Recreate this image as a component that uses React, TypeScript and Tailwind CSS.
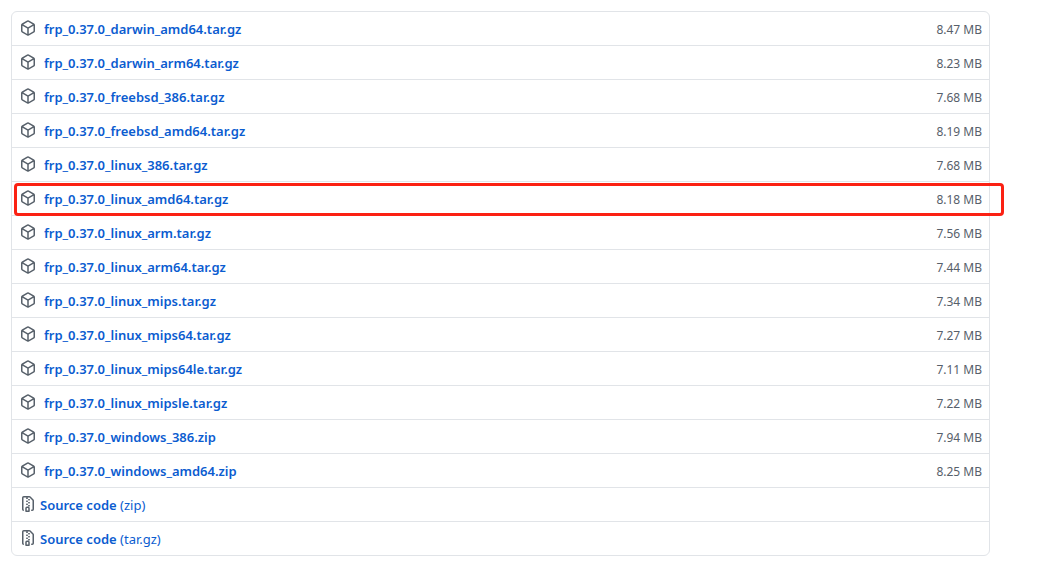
const assets = [
  { name: "frp_0.37.0_darwin_amd64.tar.gz", size: "8.47 MB" },
  { name: "frp_0.37.0_darwin_arm64.tar.gz", size: "8.23 MB" },
  { name: "frp_0.37.0_freebsd_386.tar.gz", size: "7.68 MB" },
  { name: "frp_0.37.0_freebsd_amd64.tar.gz", size: "8.19 MB" },
  { name: "frp_0.37.0_linux_386.tar.gz", size: "7.68 MB" },
  { name: "frp_0.37.0_linux_amd64.tar.gz", size: "8.18 MB", highlighted: true },
  { name: "frp_0.37.0_linux_arm.tar.gz", size: "7.56 MB" },
  { name: "frp_0.37.0_linux_arm64.tar.gz", size: "7.44 MB" },
  { name: "frp_0.37.0_linux_mips.tar.gz", size: "7.34 MB" },
  { name: "frp_0.37.0_linux_mips64.tar.gz", size: "7.27 MB" },
  { name: "frp_0.37.0_linux_mips64le.tar.gz", size: "7.11 MB" },
  { name: "frp_0.37.0_linux_mipsle.tar.gz", size: "7.22 MB" },
  { name: "frp_0.37.0_windows_386.zip", size: "7.94 MB" },
  { name: "frp_0.37.0_windows_amd64.zip", size: "8.25 MB" },
];

const sources = ["zip", "tar.gz"];

function PackageIcon() {
  return (
    <svg viewBox="0 0 16 16" className="mb-1 size-4 shrink-0 fill-[#57606a]" aria-hidden="true">
      <path
        fillRule="evenodd"
        d="M8.878.392a1.75 1.75 0 00-1.756 0l-5.25 3.045A1.75 1.75 0 001 4.951v6.098c0 .624.332 1.2.872 1.514l5.25 3.045a1.75 1.75 0 001.756 0l5.25-3.045c.54-.313.872-.89.872-1.514V4.951c0-.624-.332-1.2-.872-1.514L8.878.392zM7.875 1.69a.25.25 0 01.25 0l4.63 2.685L8 7.133 3.245 4.375l4.63-2.685zM2.5 5.677v5.372c0 .09.047.171.125.216l4.625 2.683V8.432L2.5 5.677zm6.25 8.271l4.625-2.683a.25.25 0 00.125-.216V5.677L8.75 8.432v5.516z"
      />
    </svg>
  );
}

function FileZipIcon() {
  return (
    <svg viewBox="0 0 16 16" className="mb-1 size-4 shrink-0 fill-[#57606a]" aria-hidden="true">
      <path
        fillRule="evenodd"
        d="M3.5 1.75a.25.25 0 01.25-.25h3a.75.75 0 000 1.5h.5a.75.75 0 000-1.5h2.086a.25.25 0 01.177.073l2.914 2.914a.25.25 0 01.073.177v8.586a.25.25 0 01-.25.25h-.5a.75.75 0 000 1.5h.5A1.75 1.75 0 0014 13.25V4.664c0-.464-.184-.909-.513-1.237L10.573.513A1.75 1.75 0 009.336 0H3.75A1.75 1.75 0 002 1.75v11.5c0 .649.353 1.214.874 1.515a.75.75 0 10.752-1.298.25.25 0 01-.126-.217V1.75zM8.75 3a.75.75 0 000 1.5h.5a.75.75 0 000-1.5h-.5zM6 5.25a.75.75 0 01.75-.75h.5a.75.75 0 010 1.5h-.5A.75.75 0 016 5.25zm2 1.5A.75.75 0 018.75 6h.5a.75.75 0 010 1.5h-.5A.75.75 0 018 6.75zm-1.25.75a.75.75 0 000 1.5h.5a.75.75 0 000-1.5h-.5zM8 9.75A.75.75 0 018.75 9h.5a.75.75 0 010 1.5h-.5A.75.75 0 018 9.75zm-1 .75a1.75 1.75 0 00-1.75 1.75v3c0 .414.336.75.75.75h3a.75.75 0 00.75-.75v-3A1.75 1.75 0 008 10.5H7zm-.25 1.75A.25.25 0 017 12h1a.25.25 0 01.25.25v2.25h-1.5v-2.25z"
      />
    </svg>
  );
}

export default function App() {
  return (
    <main className="min-h-screen bg-white py-[11px] pr-[49px] pl-[11px] font-['Noto_Sans',sans-serif] text-[13px] leading-[21px] text-[#0b5cd0]">
      <ul className="divide-y divide-[#e1e4e8] rounded-md border border-[#e1e4e8]">
        {assets.map((asset) => (
          <li key={asset.name} className="relative flex items-center justify-between pt-[7px] pr-[7px] pb-[5px] pl-2">
            <a href={"#" + asset.name} className="flex items-center gap-2 font-semibold">
              <PackageIcon />
              {asset.name}
            </a>
            <span className="text-xs leading-[21px] text-[#57606a]">{asset.size}</span>
            {asset.highlighted && (
              <div className="pointer-events-none absolute top-px -right-[15px] -bottom-px left-0.5 rounded-sm border-3 border-[#fb2113]" />
            )}
          </li>
        ))}
        {sources.map((format) => (
          <li key={format} className="flex items-center pt-[7px] pr-[7px] pb-[5px] pl-2">
            <a href={"#source-" + format} className="flex items-center gap-1">
              <FileZipIcon />
              <span>
                <span className="font-semibold">Source code</span> ({format})
              </span>
            </a>
          </li>
        ))}
      </ul>
    </main>
  );
}
